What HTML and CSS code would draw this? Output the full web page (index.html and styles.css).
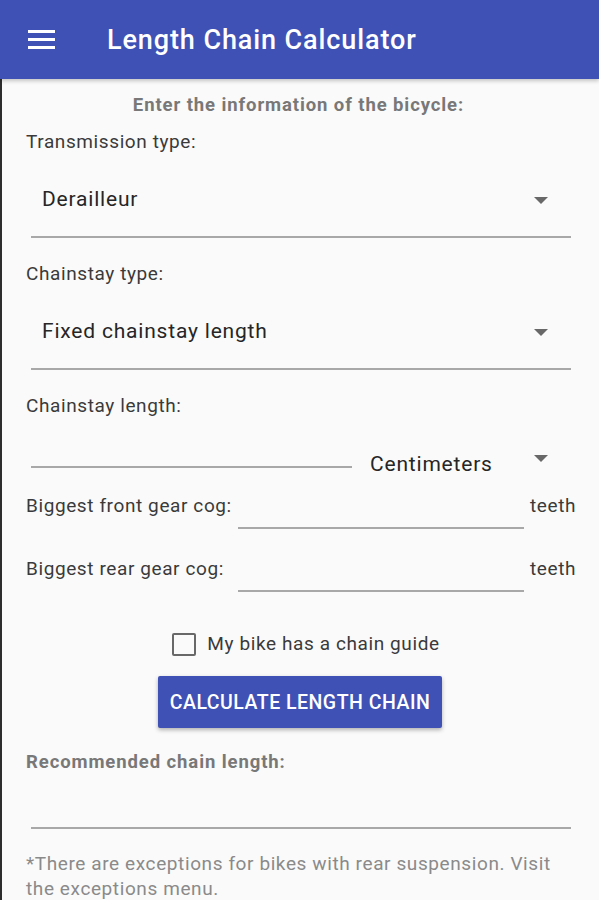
FILE: index.html
```html
<!DOCTYPE html>
<html>
<head>
<meta charset="utf-8">
<link rel="stylesheet" href="styles.css">
</head>
<body>
<header class="appbar">
  <svg class="menu" width="27" height="19" viewBox="0 0 27 19"><rect x="0" y="0" width="27" height="3" fill="#fff"/><rect x="0" y="8" width="27" height="3" fill="#fff"/><rect x="0" y="16" width="27" height="3" fill="#fff"/></svg>
  <h1 class="title">Length Chain Calculator</h1>
</header>
<main class="content">
  <div class="intro">Enter the information of the bicycle:</div>
  <div class="label l1">Transmission type:</div>
  <div class="select"><span class="seltext">Derailleur</span><span class="arrow"></span></div>
  <div class="label l2">Chainstay type:</div>
  <div class="select"><span class="seltext">Fixed chainstay length</span><span class="arrow"></span></div>
  <div class="label l2">Chainstay length:</div>
  <div class="lenrow">
    <div class="lenline"></div>
    <div class="unit"><span>Centimeters</span><span class="arrow up"></span></div>
  </div>
  <div class="cogrow front"><span class="coglabel">Biggest front gear cog:</span><span class="cogline"></span><span class="teeth">teeth</span></div>
  <div class="cogrow rear"><span class="coglabel">Biggest rear gear cog:</span><span class="cogline"></span><span class="teeth">teeth</span></div>
  <div class="check"><span class="box"></span><span>My bike has a chain guide</span></div>
  <div class="btnwrap"><button class="btn">CALCULATE LENGTH CHAIN</button></div>
  <div class="rec">Recommended chain length:</div>
  <div class="recline"></div>
  <p class="note">*There are exceptions for bikes with rear suspension. Visit the exceptions menu.</p>
</main>
</body>
</html>
```
FILE: styles.css
```css
html, body { margin: 0; padding: 0; }
body {
  width: 599px;
  height: 900px;
  overflow: hidden;
  background: #fafafa;
  font-family: Roboto, "Liberation Sans", sans-serif;
  color: #3a3a3a;
}
.appbar {
  height: 79px;
  background: #3f51b5;
  display: flex;
  align-items: center;
  box-shadow: 0 2px 4px rgba(0,0,0,0.22);
  position: relative;
  z-index: 1;
}
.menu { margin-left: 28px; margin-top: 0; }
.title {
  margin: 0 0 0 52px;
  color: #fff;
  font-size: 27px;
  font-weight: 500;
  letter-spacing: 0.9px;
  line-height: 32px;
}
.content {
  border-left: 2px solid #2d2d2d;
  height: 821px;
  box-sizing: border-box;
  padding: 0 28px 0 24px;
  font-size: 19px;
  letter-spacing: 0.6px;
  line-height: 24px;
}
.intro {
  text-align: center;
  color: #787878;
  font-weight: 700;
  font-size: 18.5px;
  letter-spacing: 0.9px;
  padding-top: 14px;
  line-height: 24px;
}
.label { color: #3a3a3a; }
.l1 { margin-top: 13px; }
.l2 { margin-top: 24px; }
.select {
  margin-left: 5px;
  padding: 31px 0 23px 11px;
  border-bottom: 2px solid #a8a8a8;
  display: flex;
  align-items: center;
  justify-content: space-between;
}
.seltext {
  font-size: 21px;
  letter-spacing: 0.8px;
  line-height: 28px;
  color: #262626;
}
.arrow {
  width: 0; height: 0;
  border-left: 7px solid transparent;
  border-right: 7px solid transparent;
  border-top: 7px solid #686868;
  margin-right: 23px;
  margin-top: 3px;
}
.lenrow {
  display: flex;
  align-items: flex-start;
  margin-top: 32px;
}
.lenline {
  margin-left: 5px;
  width: 321px;
  height: 16px;
  border-bottom: 2px solid #a8a8a8;
  flex-shrink: 0;
}
.unit {
  flex: 1;
  display: flex;
  justify-content: space-between;
  align-items: flex-start;
  font-size: 21px;
  letter-spacing: 0.8px;
  margin-left: 18px;
  line-height: 28px;
  color: #262626;
}
.arrow.up { margin-top: 5px; }
.cogrow {
  display: flex;
  align-items: flex-start;
}
.front { margin-top: 16px; }
.rear { margin-top: 28px; }
.coglabel { width: 212px; flex-shrink: 0; white-space: nowrap; }
.cogline {
  width: 286px;
  height: 33px;
  flex-shrink: 0;
  border-bottom: 2px solid #a8a8a8;
}
.teeth { margin-left: 6px; flex-shrink: 0; }
.check {
  display: flex;
  align-items: center;
  justify-content: center;
  margin-top: 40px;
  gap: 11px;
  height: 24px;
  padding-left: 15px;
}
.box {
  width: 20px; height: 19px;
  border: 2px solid #686868;
  border-radius: 2px;
}
.btnwrap { display: flex; justify-content: center; margin-top: 20px; padding-left: 3px; }
.btn {
  width: 284px;
  height: 52px;
  background: #3f51b5;
  color: #fff;
  border: none;
  border-radius: 2px;
  font-family: Roboto, "Liberation Sans", sans-serif;
  font-weight: 500;
  font-size: 19.5px;
  letter-spacing: 0.5px;
  box-shadow: 0 2px 4px rgba(0,0,0,0.3);
  padding: 0;
}
.rec {
  margin-top: 22px;
  color: #787878;
  font-weight: 700;
  font-size: 18.5px;
  letter-spacing: 0.9px;
}
.recline {
  margin-left: 5px;
  margin-top: 53px;
  border-bottom: 2px solid #a8a8a8;
}
.note {
  margin: 22px 0 0 0;
  color: #8a8a8a;
  line-height: 25px;
}
```
